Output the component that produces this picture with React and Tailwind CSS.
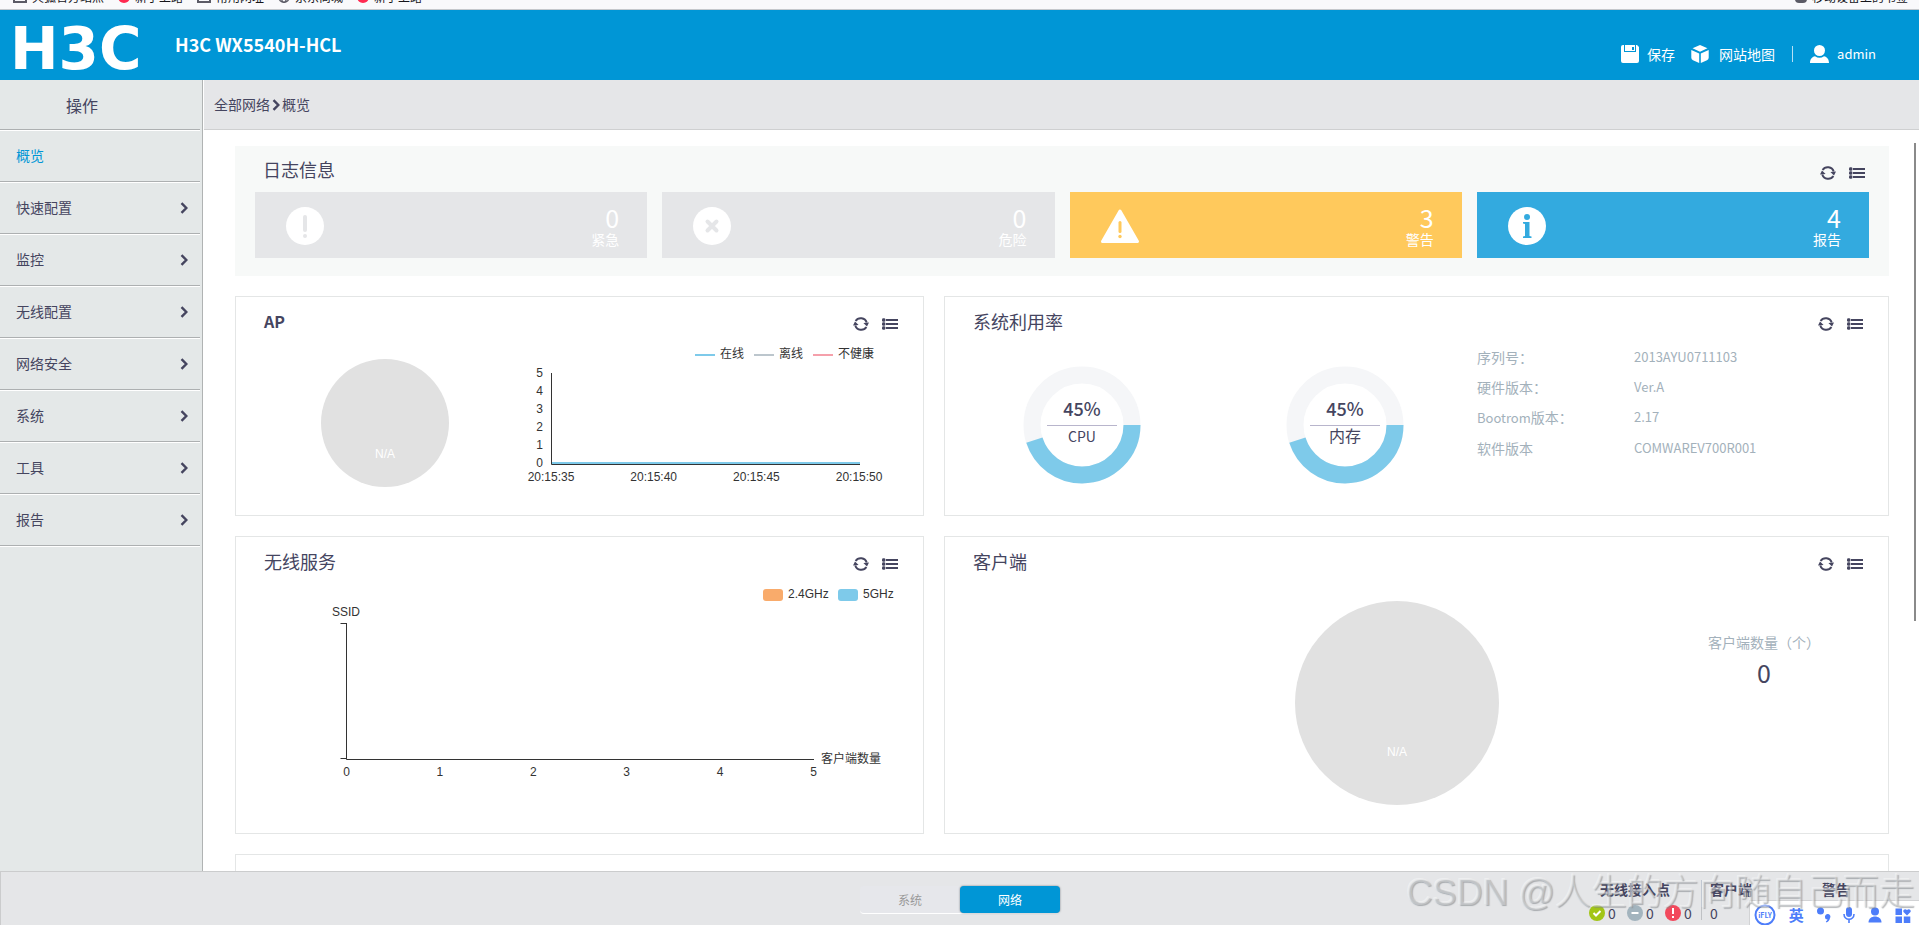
import React from "react";

const MENU = ["概览", "快速配置", "监控", "无线配置", "网络安全", "系统", "工具", "报告"];

const SPECS = [
  ["序列号：", "2013AYU0711103"],
  ["硬件版本：", "Ver.A"],
  ["Bootrom版本：", "2.17"],
  ["软件版本", "COMWAREV700R001"],
];

function Chevron({ className }) {
  return (
    <svg viewBox="0 0 8 12" className={className} fill="none" stroke="currentColor" strokeWidth="2.4" aria-hidden="true">
      <path d="M1.5 1.2 6.3 6 1.5 10.8" />
    </svg>
  );
}

function RefreshIcon() {
  return (
    <svg viewBox="0 0 16 14" className="h-[14px] w-4" aria-hidden="true">
      <g fill="none" stroke="currentColor" strokeWidth="2">
        <path d="M2.600 4A6.200 6.200 0 0 1 13.700 5.500" />
        <path d="M13.400 10A6.200 6.200 0 0 1 2.300 8.500" />
      </g>
      <path d="M10.400 6l5.600-.6-2 4zM5.600 8L0 8.600l2-4z" fill="currentColor" />
    </svg>
  );
}

function ListIcon() {
  return (
    <svg viewBox="0 0 16 12" className="h-3 w-4" fill="currentColor" aria-hidden="true">
      {[0, 4, 8].map((y) => (
        <g key={y}>
          <rect x="0" y={y + 0.2} width="3.4" height="3.6" rx="1.4" />
          <rect x="4" y={y + 1} width="12" height="2" />
        </g>
      ))}
    </svg>
  );
}

function PanelHeader({ title, latin }) {
  return (
    <div className="flex h-11 items-center justify-between pt-1 pr-[25px] pl-7 text-[#45455f]">
      <h2 className={latin ? "text-[16px] font-bold" : "text-[18px]"}>{title}</h2>
      <div className="flex items-center gap-[13px] pt-[6px]">
        <button type="button" aria-label="刷新"><RefreshIcon /></button>
        <button type="button" aria-label="详情"><ListIcon /></button>
      </div>
    </div>
  );
}

function Panel({ title, latin, className = "", children }) {
  return (
    <section className={`overflow-hidden border border-[#e4e6e6] bg-white ${className}`}>
      {title && <PanelHeader title={title} latin={latin} />}
      {children}
    </section>
  );
}

function LogCard({ count, label, tone, icon }) {
  return (
    <a href="#log" className={`flex h-[66px] items-center justify-between pr-7 pl-[31px] text-white ${tone}`}>
      <svg viewBox="0 -1 40 40" className="size-10" aria-hidden="true">{icon}</svg>
      <span className="flex flex-col items-end">
        <span className="text-[25px] leading-7">{count}</span>
        <span className="text-[14px] leading-4">{label}</span>
      </span>
    </a>
  );
}

function Gauge({ label }) {
  const c = 2 * Math.PI * 50;
  return (
    <svg viewBox="0 0 118 118" className="size-[118px]">
      <circle cx="59" cy="59" r="50" fill="none" stroke="#f5f6f8" strokeWidth="17" />
      <circle cx="59" cy="59" r="50" fill="none" stroke="#7ecaea" strokeWidth="17" strokeDasharray={`${c * 0.45} ${c}`} />
      <text x="59" y="50" textAnchor="middle" fontSize="18" fontWeight="500" fill="#45455f">45%</text>
      <path d="M24 59.5h70" stroke="#b8b5cc" />
      <text x="59" y="76" textAnchor="middle" fontSize={label === "CPU" ? 14 : 16} fill="#45455f">{label}</text>
    </svg>
  );
}

const CHART = "font-['Liberation_Sans','Noto_Sans_CJK_SC',sans-serif] text-[12px]";

function ApChart() {
  return (
    <svg viewBox="0 0 370 145" className={`mt-1 h-[145px] w-[370px] shrink-0 ${CHART}`} fill="#333">
      {[["在线", 170, "#7ecaea"], ["离线", 229, "#bcc6cd"], ["不健康", 288, "#f5a0ab"]].map(([t, x, color]) => (
        <g key={t}>
          <path d={`M${x} 10h20`} stroke={color} strokeWidth="2" />
          <text x={x + 25} y="13">{t}</text>
        </g>
      ))}
      {[0, 1, 2, 3, 4, 5].map((n) => (
        <text key={n} x="18" y={122 - n * 18} textAnchor="end">{n}</text>
      ))}
      <path d="M26 118h309" stroke="#7ecaea" strokeWidth="2" />
      <path d="M26.5 28v91.5H335" fill="none" stroke="#333" />
      {["20:15:35", "20:15:40", "20:15:45", "20:15:50"].map((t, i) => (
        <text key={t} x={26 + i * 102.7} y="136" textAnchor="middle">{t}</text>
      ))}
    </svg>
  );
}

function SsidChart() {
  return (
    <svg viewBox="0 0 590 200" className={`mt-1 h-[200px] w-[590px] shrink-0 ${CHART}`} fill="#333">
      <rect x="437" y="4" width="20" height="12" rx="3" fill="#f9ab6b" />
      <text x="462" y="13">2.4GHz</text>
      <rect x="512" y="4" width="20" height="12" rx="3" fill="#7ecaea" />
      <text x="537" y="13">5GHz</text>
      <text x="20" y="31" textAnchor="middle">SSID</text>
      <path d="M14.5 38.5h6M14.5 173.5h6M20.5 38v136.5H488" fill="none" stroke="#333" />
      {[0, 1, 2, 3, 4, 5].map((n) => (
        <text key={n} x={20.5 + n * 93.4} y="191" textAnchor="middle">{n}</text>
      ))}
      <text x="495" y="178">客户端数量</text>
    </svg>
  );
}

function Folder() {
  return (
    <svg viewBox="0 0 14 12" className="h-3 w-[14px]" aria-hidden="true">
      <path d="M1 1h4l2 2h6v8H1z" fill="none" stroke="#5b5b66" strokeWidth="2" />
    </svg>
  );
}

function Bookmark({ icon, children }) {
  return (
    <a href="#bookmark" className="flex items-center gap-[5px]">
      {icon}
      <span>{children}</span>
    </a>
  );
}

const redDot = <span className="size-3 rounded-full bg-[#ff2a51]" />;

function BookmarkBar() {
  return (
    <div className="flex h-[10px] shrink-0 items-end justify-between overflow-hidden border-b border-[#c5c8cc] bg-[#f9f9fb] pr-[11px] pb-1 pl-[13px] text-[12px] leading-4 text-[#15141a]">
      <div className="flex gap-[14px]">
        <Bookmark icon={<Folder />}>火狐官方站点</Bookmark>
        <Bookmark icon={redDot}>新手上路</Bookmark>
        <Bookmark icon={<Folder />}>常用网址</Bookmark>
        <Bookmark
          icon={
            <svg viewBox="0 0 12 12" className="size-3" fill="none" stroke="#5b5b66" strokeWidth="1.3" aria-hidden="true">
              <circle cx="6" cy="6" r="5.3" />
              <ellipse cx="6" cy="6" rx="2.5" ry="5.3" />
              <path d="M1 6h10" />
            </svg>
          }
        >
          京东商城
        </Bookmark>
        <Bookmark icon={redDot}>新手上路</Bookmark>
      </div>
      <Bookmark icon={<span className="size-3 rounded-sm bg-[#5b5b66]" />}>移动设备上的书签</Bookmark>
    </div>
  );
}

function Header() {
  return (
    <header className="flex h-[70px] shrink-0 justify-between bg-[#0096d6] pr-[43px] pl-[10px] text-white">
      <div className="flex">
        <span className="w-[165px] font-['DejaVu_Sans',sans-serif] text-[58px] leading-[78px] font-bold">H3C</span>
        <h1 className="text-[18px] leading-[68px] font-bold">H3C WX5540H-HCL</h1>
      </div>
      <nav className="flex items-center pt-[18px] text-[14px]">
        <a href="#save" className="flex items-center gap-2">
          <svg viewBox="0 0 18 18" className="size-[18px]" aria-hidden="true">
            <path d="M2 0h1v7h12V0h1l2 2v14a2 2 0 0 1-2 2H2a2 2 0 0 1-2-2V2a2 2 0 0 1 2-2z" fill="#fff" />
            <path d="M4 0h10v6H4z" fill="#fff" />
            <path d="M11 2h2v3h-2z" fill="#0096d6" />
          </svg>
          保存
        </a>
        <a href="#map" className="ml-4 flex items-center gap-[10px]">
          <svg viewBox="0 0 18 18" className="size-[18px]" fill="#fff" aria-hidden="true">
            <path d="M9 0l7.500 3.300L9 6.800 1.500 3.300zM.3 5l7.900 3.600V18L2 15.300a3 3 0 0 1-1.700-2.600zM17.700 5L9.800 8.600V18l6.200-2.700a3 3 0 0 0 1.700-2.600z" />
          </svg>
          网站地图
        </a>
        <span className="mx-[17px] h-4 w-px bg-[#b5e0f5]" />
        <a href="#user" className="flex items-center gap-2 text-[13px]">
          <svg viewBox="0 0 19 18" className="h-[18px] w-[19px]" fill="#fff" aria-hidden="true">
            <circle cx="9.5" cy="5.5" r="5.5" />
            <path d="M0 18c0-4 2-6 5-6.800a8 8 0 0 0 9 0c3 .8 5 2.800 5 6.800z" />
          </svg>
          admin
        </a>
      </nav>
    </header>
  );
}

function Sidebar() {
  return (
    <aside className="w-[204px] shrink-0 border-r border-white bg-[#e4e8e8] text-[#45455f]">
      <div className="h-full border-r border-[#b0b3b3] pr-[2px]">
        <div className="flex h-[50px] items-center border-b border-[#adb0b1] pl-[66px] text-[16px]">操作</div>
        <nav>
          {MENU.map((m, i) => (
            <a
              key={m}
              href="#menu"
              className={`flex h-[52px] items-center justify-between border-t border-b border-t-white border-b-[#adb0b1] pr-3 pb-px pl-4 text-[14px] ${i === 0 ? "text-[#0096d6]" : ""}`}
            >
              {m}
              {i > 0 && <Chevron className="h-3 w-2" />}
            </a>
          ))}
          <div className="h-px bg-white" />
        </nav>
      </div>
    </aside>
  );
}

function Status({ color, mark }) {
  return (
    <span className="flex w-[38px] shrink-0 items-center gap-[3px]">
      <svg viewBox="0 0 16 16" className="size-4" aria-hidden="true">
        <circle cx="8" cy="8" r="8" fill={color} />
        <path d={mark} fill="none" stroke="#fff" strokeWidth="2" />
      </svg>
      0
    </span>
  );
}

function Footer() {
  return (
    <footer className="grid h-[54px] shrink-0 grid-cols-[1fr_auto_1fr] border-t border-l border-[#cbcccd] bg-[#e5e6e8] text-[#45455f]">
      <div />
      <div className="mt-[14px] flex h-7 w-[200px] rounded border-b border-white bg-[#e6e7eb] text-[12px]">
        <button type="button" className="flex-1 text-[#999]">系统</button>
        <button type="button" className="flex-1 rounded bg-[#0096d6] text-white shadow-[0_0_2px_0_#6a7279]">网络</button>
      </div>
      <div className="flex justify-self-end pt-2 pr-4 text-[14px] leading-[18px]">
        <div className="flex w-28 flex-col gap-[6px]">
          <b className="pl-[11px]">无线接入点</b>
          <div className="flex">
            <Status color="#a2c516" mark="M4.5 8l2.5 2.5 4.5-4.5" />
            <Status color="#a3b4be" mark="M4.5 8h7" />
            <Status color="#f2495c" mark="M8 3v6M8 11v2" />
          </div>
        </div>
        <div className="flex h-10 w-[68px] flex-col gap-[6px] border-l border-[#bfc1c4] pl-2">
          <b>客户端</b>
          <span>0</span>
        </div>
        <div className="w-[134px] text-center">
          <b>警告</b>
        </div>
      </div>
    </footer>
  );
}

function ImeBar() {
  return (
    <div className="absolute right-0 bottom-0 flex h-[25px] w-[170px] items-center justify-between border-t border-l border-[#d2d3d5] bg-white pt-1 pr-2 pl-1 text-[#4d7dfa]">
      <svg viewBox="0 0 22 22" className="size-[22px]" aria-hidden="true">
        <circle cx="11" cy="11" r="9.5" fill="none" stroke="currentColor" strokeWidth="2" />
        <text x="11" y="13.5" textAnchor="middle" fontSize="7" fontWeight="bold" fill="currentColor">iFLY</text>
      </svg>
      <b className="text-[15px] leading-5">英</b>
      <svg viewBox="0 0 14 16" className="h-4 w-[14px]" fill="currentColor" aria-hidden="true">
        <circle cx="3.5" cy="4" r="3.5" />
        <path d="M8 10a2.700 2.700 0 1 1 5 1c-.4 2-1.500 3.500-3.500 4.500l-.7-1c1-.6 1.500-1.200 1.700-2A2.500 2.500 0 0 1 8 10z" />
      </svg>
      <svg viewBox="0 0 12 16" className="h-4 w-3" fill="currentColor" aria-hidden="true">
        <rect x="3" width="6" height="10" rx="3" />
        <path d="M1 7c0 7 10 7 10 0M6 12v4" fill="none" stroke="currentColor" strokeWidth="1.6" />
      </svg>
      <svg viewBox="0 0 14 16" className="h-4 w-[14px]" fill="currentColor" aria-hidden="true">
        <circle cx="7" cy="4.5" r="4" />
        <path d="M.5 15.500c0-8 13-8 13 0z" />
      </svg>
      <svg viewBox="0 0 16 16" className="size-4" fill="currentColor" aria-hidden="true">
        <path d="M.5 1.500h6.500V8H.5zM.5 9.500H7V16H.5zM8.800 9.500h6.500V16H8.800zM12 8.500L8.500 5c-1-2 1.500-4 3.500-2 2-2 4.500 0 3.500 2z" />
      </svg>
    </div>
  );
}

export default function App() {
  return (
    <div className="relative flex h-screen flex-col overflow-hidden bg-white font-['Noto_Sans_CJK_SC',sans-serif]">
      <BookmarkBar />
      <Header />
      <div className="flex min-h-0 flex-1">
        <Sidebar />
        <div className="flex min-w-0 flex-1 flex-col">
          <div className="flex h-[50px] shrink-0 items-center border-b border-[#cfd0d1] bg-[#e5e6e8] pl-[10px] text-[14px] text-[#45455f]">
            <span>全部网络</span>
            <Chevron className="mx-[2px] h-3 w-2" />
            <span>概览</span>
          </div>
          <main className="relative flex min-h-0 flex-1 flex-col gap-5 overflow-hidden pt-4 pr-[30px] pl-[31px]">
            <section className="shrink-0 bg-[#f7f9f8] px-5 pb-[18px]">
              <div className="flex h-[46px] items-center justify-between pr-1 pl-2 text-[#45455f]">
                <h2 className="text-[18px]">日志信息</h2>
                <div className="flex items-center gap-[13px] pt-2">
                  <button type="button" aria-label="刷新"><RefreshIcon /></button>
                  <button type="button" aria-label="详情"><ListIcon /></button>
                </div>
              </div>
              <div className="grid grid-cols-4 gap-[15px]">
                <LogCard
                  count="0" label="紧急" tone="bg-[#e5e6e8]"
                  icon={
                    <>
                      <circle cx="19" cy="20" r="19" fill="#fff" />
                      <rect x="17" y="9" width="4" height="17" rx="2" fill="#e5e6e8" />
                      <circle cx="19" cy="30" r="2" fill="#e5e6e8" />
                    </>
                  }
                />
                <LogCard
                  count="0" label="危险" tone="bg-[#e5e6e8]"
                  icon={
                    <>
                      <circle cx="19" cy="20" r="19" fill="#fff" />
                      <path d="M14.500 15.500l9 9m0-9l-9 9" stroke="#e5e6e8" strokeWidth="4" strokeLinecap="round" />
                    </>
                  }
                />
                <LogCard
                  count="3" label="警告" tone="bg-[#ffc95c]"
                  icon={
                    <>
                      <path d="M19 5L36.500 35.500H1.500z" fill="#fff" stroke="#fff" strokeWidth="3" strokeLinejoin="round" />
                      <rect x="17.500" y="15" width="3" height="12" rx="1.5" fill="#ffc95c" />
                      <circle cx="19" cy="30.5" r="1.7" fill="#ffc95c" />
                    </>
                  }
                />
                <LogCard
                  count="4" label="报告" tone="bg-[#33aadf]"
                  icon={
                    <>
                      <circle cx="19" cy="20" r="19" fill="#fff" />
                      <circle cx="19" cy="11" r="3" fill="#33aadf" />
                      <path d="M15 16h6.500v14l2 .6V32H15v-1.400l2-.6V18l-2-.6z" fill="#33aadf" />
                    </>
                  }
                />
              </div>
            </section>

            <div className="grid shrink-0 grid-cols-[689fr_945fr] gap-5">
              <Panel title="AP" latin className="h-[220px]">
                <div className="flex pl-[85px]">
                  <div className="mt-[18px] mr-[76px] flex size-32 shrink-0 items-end justify-center rounded-full bg-[#e1e1e1] pb-6 font-['Liberation_Sans',sans-serif] text-[12px] text-white">
                    N/A
                  </div>
                  <ApChart />
                </div>
              </Panel>
              <Panel title="系统利用率" className="h-[220px]">
                <div className="flex justify-between">
                  <div className="flex gap-[145px] pt-[25px] pl-[78px]">
                    <Gauge label="CPU" />
                    <Gauge label="内存" />
                  </div>
                  <dl className="mt-px grid w-[411px] grid-cols-[157px_1fr] content-start text-[14px] leading-[30px] text-[#a3b1bb]">
                    {SPECS.map(([k, v]) => (
                      <React.Fragment key={k}>
                        <dt>
                          {k.startsWith("Bootrom") ? (
                            <><span className="text-[13px]">Bootrom</span>{k.slice(7)}</>
                          ) : k}
                        </dt>
                        <dd className="text-[13px]">{v}</dd>
                      </React.Fragment>
                    ))}
                  </dl>
                </div>
              </Panel>
            </div>

            <div className="grid shrink-0 grid-cols-[689fr_945fr] gap-5">
              <Panel title="无线服务" className="h-[298px]">
                <div className="pl-[90px]">
                  <SsidChart />
                </div>
              </Panel>
              <Panel title="客户端" className="h-[298px]">
                <div className="flex justify-between pr-[68px] pl-[350px]">
                  <div className="mt-5 flex size-[204px] items-end justify-center rounded-full bg-[#e1e1e1] pb-11 font-['Liberation_Sans',sans-serif] text-[12px] text-white">
                    N/A
                  </div>
                  <div className="pt-[51px] text-center">
                    <div className="text-[14px] leading-5 text-[#a3b1bb]">客户端数量（个）</div>
                    <div className="text-[25px] leading-10 text-[#45455f]">0</div>
                  </div>
                </div>
              </Panel>
            </div>

            <Panel className="h-[220px] shrink-0" />
            <div className="absolute top-[13px] right-[3px] h-[478px] w-[2px] bg-[#8a8a8a]" />
          </main>
        </div>
      </div>
      <Footer />
      <ImeBar />
      <div className="pointer-events-none absolute right-1 bottom-3 font-['Liberation_Sans','Noto_Sans_CJK_SC',sans-serif] text-[36px] leading-10 font-light text-[#e4e5e6]/40 [text-shadow:1px_1px_1px_#80858a99,-1px_-1px_0_#ffffff66]">
        CSDN @人生的方向随自己而走
      </div>
    </div>
  );
}
